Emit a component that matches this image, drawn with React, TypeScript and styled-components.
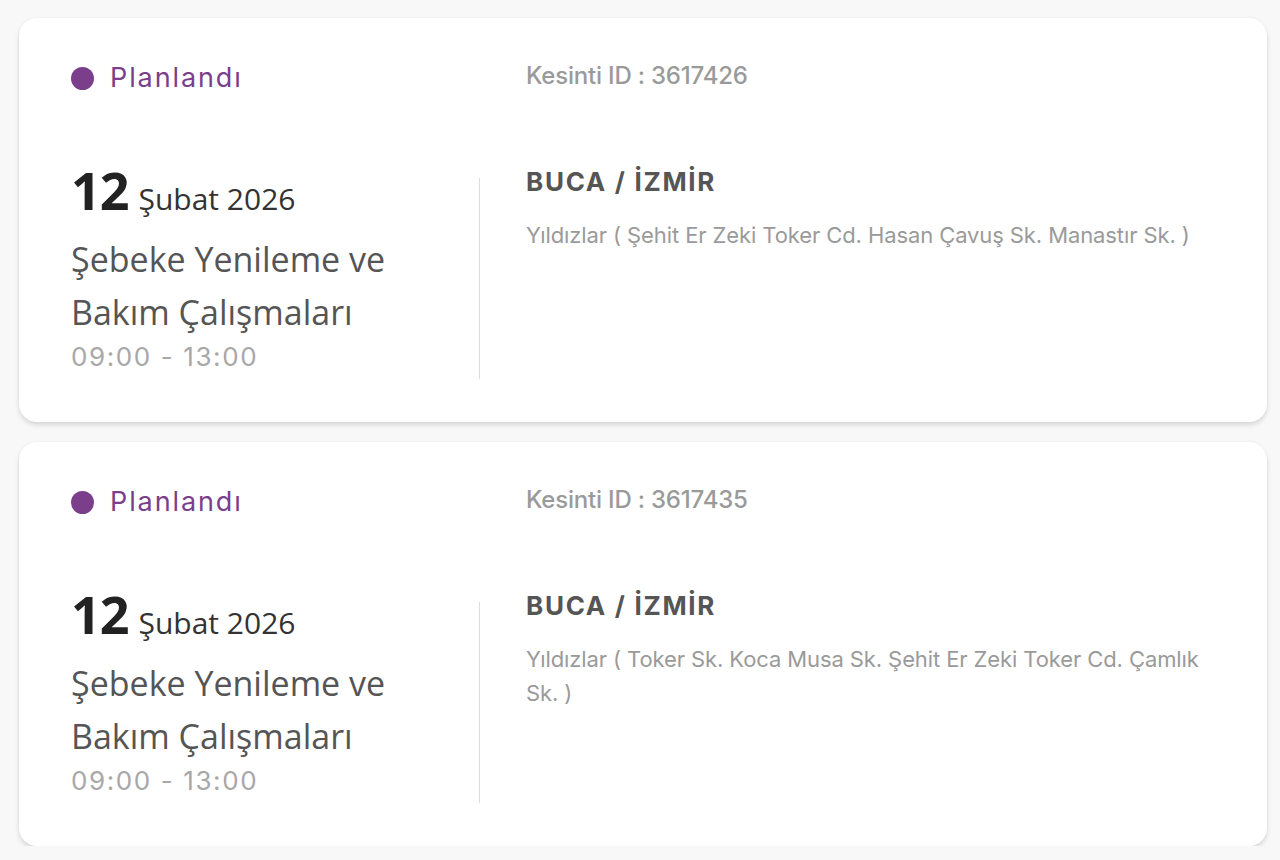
import React from "react";
import styled, { createGlobalStyle } from "styled-components";

type Outage = {
  id: number;
  status: string;
  day: string;
  monthYear: string;
  title: string;
  time: string;
  district: string;
  city: string;
  address: string;
};

const outages: Outage[] = [
  {
    id: 3617426,
    status: "Planlandı",
    day: "12",
    monthYear: "Şubat 2026",
    title: "Şebeke Yenileme ve Bakım Çalışmaları",
    time: "09:00 - 13:00",
    district: "BUCA",
    city: "İZMİR",
    address: "Yıldızlar ( Şehit Er Zeki Toker Cd. Hasan Çavuş Sk. Manastır Sk. )",
  },
  {
    id: 3617435,
    status: "Planlandı",
    day: "12",
    monthYear: "Şubat 2026",
    title: "Şebeke Yenileme ve Bakım Çalışmaları",
    time: "09:00 - 13:00",
    district: "BUCA",
    city: "İZMİR",
    address: "Yıldızlar ( Toker Sk. Koca Musa Sk. Şehit Er Zeki Toker Cd. Çamlık Sk. )",
  },
];

function App() {
  return (
    <>
      <GlobalStyle />
      <List>
        {outages.map((item) => (
          <Card key={item.id}>
            <TopRow>
              <Status>
                <Dot />
                {item.status}
              </Status>
              <OutageId>Kesinti ID : {item.id}</OutageId>
            </TopRow>

            <BottomRow>
              <Left>
                <DateLine>
                  <Day>{item.day}</Day>
                  <MonthYear>{item.monthYear}</MonthYear>
                </DateLine>
                <Title>{item.title}</Title>
                <Time>{item.time}</Time>
              </Left>
              <Divider />
              <Right>
                <Place>
                  {item.district} / {item.city}
                </Place>
                <Address>{item.address}</Address>
              </Right>
            </BottomRow>
          </Card>
        ))}
      </List>
    </>
  );
}

export default App;

const GlobalStyle = createGlobalStyle`
  html, body {
    margin: 0;
    padding: 0;
    background: #f8f8f8;
  }
`;

const List = styled.div`
  display: flex;
  flex-direction: column;
  gap: 20px;
  padding: 18px 13px 0 19px;
`;

const Card = styled.div`
  background: #ffffff;
  border-radius: 18px;
  box-shadow: 0 3px 5px rgba(0, 0, 0, 0.13), 0 0 3px rgba(0, 0, 0, 0.04);
  height: 404px;
  box-sizing: border-box;
  padding: 42px 52px 0 52px;
`;

const TopRow = styled.div`
  display: grid;
  grid-template-columns: 455px 1fr;
  align-items: center;
`;

const Status = styled.div`
  display: flex;
  align-items: center;
  gap: 16px;
  font-family: "Inter", sans-serif;
  font-size: 27px;
  color: #7a3e8a;
  line-height: 36px;
  letter-spacing: 1.9px;
`;

const Dot = styled.span`
  width: 23px;
  height: 23px;
  border-radius: 50%;
  background: #7a3e8a;
`;

const OutageId = styled.div`
  font-family: "Inter", sans-serif;
  font-size: 24px;
  font-weight: 500;
  color: #9a9a9a;
  line-height: 32px;
  margin-top: -4px;
  letter-spacing: -0.2px;
`;

const BottomRow = styled.div`
  display: flex;
  margin-top: 66px;
`;

const Left = styled.div`
  width: 408px;
  display: flex;
  flex-direction: column;
`;

const DateLine = styled.div`
  display: flex;
  align-items: baseline;
  gap: 10px;
  font-family: "Open Sans", sans-serif;
  line-height: 56px;
`;

const Day = styled.span`
  font-size: 52px;
  font-weight: 700;
  color: #222;
  letter-spacing: -1px;
`;

const MonthYear = styled.span`
  font-size: 30px;
  color: #333;
`;

const Title = styled.div`
  font-family: "Open Sans", sans-serif;
  font-size: 34px;
  color: #555;
  line-height: 53px;
  width: 345px;
  margin-top: 6px;
`;

const Time = styled.div`
  font-family: "Inter", sans-serif;
  font-size: 26px;
  color: #a8a8a8;
  line-height: 36px;
  letter-spacing: 1.6px;
`;

const Divider = styled.div`
  width: 1px;
  background: #dcdcdc;
  margin: 16px 0 -4px 0;
`;

const Right = styled.div`
  flex: 1;
  padding: 0 0 0 46px;
`;

const Place = styled.div`
  font-family: "Inter", sans-serif;
  font-size: 26px;
  font-weight: 700;
  color: #555;
  line-height: 40px;
  letter-spacing: 1.7px;
`;

const Address = styled.div`
  font-family: "Inter", sans-serif;
  font-size: 22px;
  color: #9a9a9a;
  line-height: 34px;
  margin-top: 16px;
  letter-spacing: -0.1px;
`;
